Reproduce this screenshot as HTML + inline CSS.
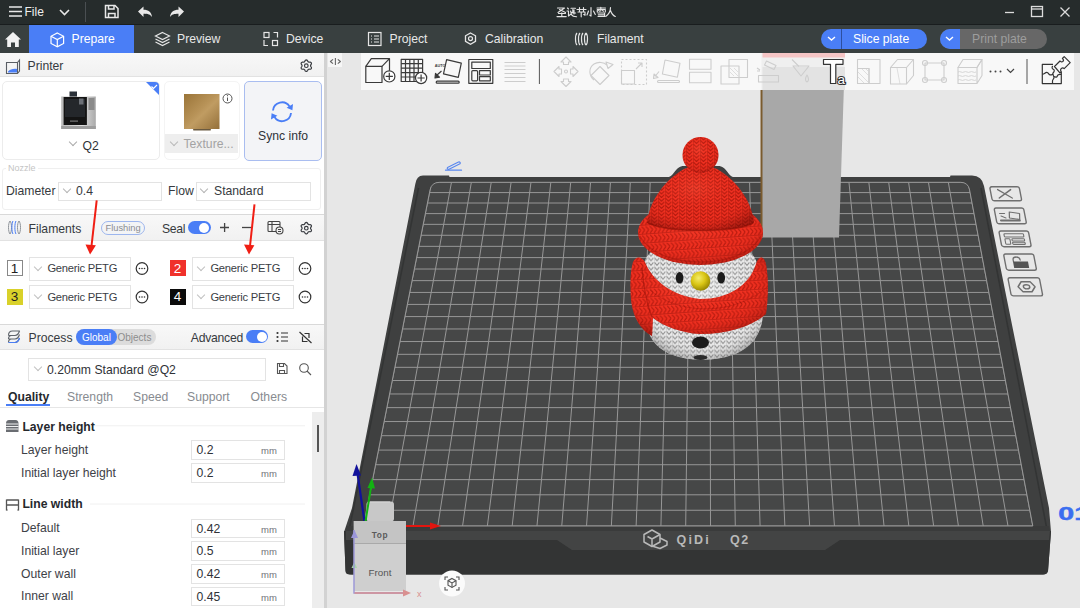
<!DOCTYPE html>
<html><head><meta charset="utf-8">
<style>
*{box-sizing:border-box;margin:0;padding:0}
html,body{width:1080px;height:608px;overflow:hidden;background:#e7e7e7;font-family:"Liberation Sans",sans-serif}
.a{position:absolute}
.t{position:absolute;white-space:nowrap;line-height:1}
#title{left:0;top:0;width:1080px;height:25px;background:#262c2c;border-bottom:1px solid #191d1e}
#tabs{left:0;top:25px;width:1080px;height:28px;background:#394040}
#panel{left:0;top:53px;width:324px;height:555px;background:#fff;overflow:hidden}
.hdr{position:absolute;left:0;width:324px;background:linear-gradient(#f8f8f8,#f1f1f1);border-top:1px solid #d9d9d9;border-bottom:1px solid #e2e2e2}
.box{position:absolute;border:1px solid #e3e3e3;background:#fff}
.dd{color:#3c3f44;font-size:12px}
.chev{position:absolute;width:6px;height:6px;border-right:1px solid #b5b5b5;border-bottom:1px solid #b5b5b5;transform:rotate(45deg)}
</style></head><body>

<!-- TITLE BAR -->
<div id="title" class="a">
  <svg class="a" style="left:0;top:0" width="1080" height="25">
    <g stroke="#e8e8e8" stroke-width="1.6" fill="none">
      <path d="M9 7h13M9 11.5h13M9 16h13"/>
      <path d="M60 10l4.5 4.5 4.5-4.5"/>
    </g>
    <line x1="85.5" y1="2" x2="85.5" y2="22" stroke="#4a4f52" stroke-width="1"/>
    <g stroke="#e8e8e8" stroke-width="1.5" fill="none">
      <path d="M105.5 5.5h9.5l3 3v9h-12.5z"/>
      <path d="M108.5 5.5v3.5h5.5v-3.5M108.5 17.5v-4h6.5v4"/>
    </g>
    <path d="M138 11.5l5.5-5v3.2c5 0 8 2.3 8.5 7.3-1.6-2.6-4-3.3-8.5-3.3v3.3z" fill="#e8e8e8"/>
    <path d="M184 11.5l-5.5-5v3.2c-5 0-8 2.3-8.5 7.3 1.6-2.6 4-3.3 8.5-3.3v3.3z" fill="#e8e8e8"/>
    <g stroke="#dcdcdc" stroke-width="1.3" fill="none">
      <path d="M1005 12.5h9"/>
      <rect x="1031.5" y="6.5" width="11" height="10"/>
      <path d="M1031.5 9h11"/>
      <path d="M1060.5 7.5l9 9M1069.5 7.5l-9 9"/>
    </g>
  </svg>
  <div class="t" style="left:24.5px;top:6px;font-size:12px;color:#eee">File</div>
  <svg class="a" style="left:0;top:0" width="1080" height="25"><g fill="none" stroke="#e4e4e4" stroke-width="1.15" stroke-linecap="round" stroke-linejoin="round">
    <path d="M557.5 8h7l-6.5 4.5M559.5 9.5l6 3M558.5 13.5h7M561.8 12.8v3.7M557 16.6h9.2"/>
    <path d="M567.5 8l1 1M567 11h1.5v5l1.5-1.2M571 8.2h4.5M572.8 9.5v3.5h2.8M574 9.8v4.2M570.6 11l1 3.8c1 1.7 3 1.9 5 1.9M571.8 12.5l-1.2 2"/>
    <path d="M577 9.5h9M579.5 7.5v3.5M583.5 7.5v3.5M578 12h7v3.2l-1.3-.6M581.2 12v4.8"/>
    <path d="M591 7.5v8.6l-1.3-1M588.5 11l-1.5 4M593.5 11l1.8 3.5"/>
    <path d="M597 8h8.5M600.8 7.3v3.8M597.3 12v-2.5h8v2.5M598.6 10.5l1 .7M602.5 10.5l1 .7M598 13h6.6v3.5h-6.6M598.3 14.8h6.3"/>
    <path d="M610.5 7.5c0 4-2 7-4.8 9M610.5 10.5c1 3 2.5 5 4.8 6"/>
  </g></svg>
</div>

<!-- TAB BAR -->
<div id="tabs" class="a">
  <div class="a" style="left:29px;top:0;width:105px;height:28px;background:#4a7ef6"></div>
  <svg class="a" style="left:0;top:0" width="1080" height="28">
    <path d="M5 14.5l8-7.5 8 7.5h-2.2v7.5h-3.8v-4.5h-4v4.5h-3.8v-7.5z" fill="#f2f2f2"/>
    <g stroke="#fff" stroke-width="1.2" fill="none">
      <path d="M57.3 8l6.3 3.3v7.2l-6.3 3.3-6.3-3.3v-7.2z"/><path d="M51 11.3l6.3 3.3 6.3-3.3M57.3 14.6v7.2"/>
    </g>
    <g stroke="#e6e6e6" stroke-width="1.2" fill="none">
      <path d="M162.5 7.5l7 3.5-7 3.5-7-3.5z"/><path d="M155.5 14l7 3.5 7-3.5M155.5 17l7 3.5 7-3.5"/>
      <rect x="264" y="7.5" width="5" height="5"/><rect x="272.5" y="15.5" width="5" height="5"/>
      <path d="M264 15v5.5h4M277.5 12.5v-5h-4"/>
      <rect x="368.5" y="7.5" width="12.5" height="13"/><path d="M371 11h1M374 11h5M371 14h1M374 14h5M371 17h1M374 17h5"/>
      <path d="M470.5 8l5 2.8v5.6l-5 2.8-5-2.8v-5.6z" stroke-width="1.3"/><circle cx="470.5" cy="13.6" r="2"/>
      <path d="M577 8c-2 2-2 10 0 12M580 8c-2 2-2 10 0 12M583 8c-2 2-2 10 0 12M586 8c-2 2-2 10 0 12M586 8c2 2 2 10 0 12"/>
    </g>
  </svg>
  <div class="t" style="left:71.5px;top:8px;font-size:12.2px;color:#fff">Prepare</div>
  <div class="t" style="left:177px;top:8px;font-size:12.2px;color:#e8e8e8">Preview</div>
  <div class="t" style="left:286px;top:8px;font-size:12.2px;color:#e8e8e8">Device</div>
  <div class="t" style="left:389.5px;top:8px;font-size:12.2px;color:#e8e8e8">Project</div>
  <div class="t" style="left:485px;top:8px;font-size:12.2px;color:#e8e8e8">Calibration</div>
  <div class="t" style="left:597px;top:8px;font-size:12.2px;color:#e8e8e8">Filament</div>
  <!-- slice plate -->
  <div class="a" style="left:821px;top:4px;width:106px;height:19.5px;border-radius:10px;background:#4a7ef6"></div>
  <div class="a" style="left:841px;top:4px;width:1px;height:19.5px;background:#2d4f9f"></div>
  <div class="t" style="left:853px;top:8px;font-size:12.2px;color:#fff">Slice plate</div>
  <div class="a" style="left:939.5px;top:4px;width:107.5px;height:19.5px;border-radius:10px;background:#676767;overflow:hidden">
    <div class="a" style="left:0;top:0;width:20px;height:20px;background:#4a7ef6"></div>
  </div>
  <div class="t" style="left:972px;top:8px;font-size:12.2px;color:#9d9d9d">Print plate</div>
  <svg class="a" style="left:0;top:0" width="1080" height="28">
    <g stroke="#fff" stroke-width="1.4" fill="none"><path d="M828 12l3.5 3 3.5-3M946 12l3.5 3 3.5-3"/></g>
  </svg>
</div>

<!-- 3D VIEW -->
<div class="a" style="left:327px;top:53px;width:753px;height:555px;background:#e7e7e7;overflow:hidden">
<svg class="a" style="left:-327px;top:-53px" width="1080" height="608">
  <!-- plate body -->
  <path d="M352 508 L415.3 184 Q416.5 175.5 423 175.5 L449 175.5 L449.5 177 L668 177 C674 177,675 166,684 166 L718 166 C727 166,728 177,734 177 L950 177 L950.5 175.5 L972 175.5 Q982 175.5 984 186 L1049 508 L1051 532 L1048 571 Q1047 574.5 1043 574.5 L352 574.5 Q345.5 574.5 345.5 570 L344 532 Z" fill="#3f4040"/>
  <path d="M418.5 188 L349.5 528" stroke="#333434" stroke-width="1.6" fill="none"/>
  <path d="M981 188 L1046.5 527" stroke="#333434" stroke-width="1.6" fill="none"/>
  <!-- front face -->
  <path d="M344 531 L1051 531 L1048 571 Q1047 574.5 1043 574.5 L350 574.5 Q345.5 574.5 345.5 571 Z" fill="#333434"/>
  <path d="M346 531 L1050 531 L1049 540 L840 540 L825 550 L572 550 L557 540 L346 540 Z" fill="#434444"/>
  <path d="M346 526 L1049 526 L1050 531 L346 531 Z" fill="#3a3b3b"/>
  <!-- grid area -->
  <defs><clipPath id="gclip"><path d="M439.5 182.3 L960.5 182.3 Q968.2 182.3 969.6 190 L1032.8 526 L363.4 526 L430 190 Q431.6 182.3 439.5 182.3Z"/></clipPath></defs>
  <path d="M439.5 182.3 L960.5 182.3 Q968.2 182.3 969.6 190 L1032.8 526 L363.4 526 L430 190 Q431.6 182.3 439.5 182.3Z" fill="#464747"/>
  <g stroke="#979797" stroke-width="1" fill="none" clip-path="url(#gclip)">
<line x1="431.60" y1="182.30" x2="363.40" y2="526.00"/>
<line x1="431.60" y1="182.30" x2="968.20" y2="182.30"/>
<line x1="451.47" y1="182.30" x2="388.19" y2="526.00"/>
<line x1="429.56" y1="192.58" x2="970.13" y2="192.58"/>
<line x1="471.35" y1="182.30" x2="412.99" y2="526.00"/>
<line x1="427.49" y1="203.01" x2="972.09" y2="203.01"/>
<line x1="491.22" y1="182.30" x2="437.78" y2="526.00"/>
<line x1="425.39" y1="213.60" x2="974.08" y2="213.60"/>
<line x1="511.10" y1="182.30" x2="462.57" y2="526.00"/>
<line x1="423.26" y1="224.35" x2="976.10" y2="224.35"/>
<line x1="530.97" y1="182.30" x2="487.36" y2="526.00"/>
<line x1="421.09" y1="235.27" x2="978.16" y2="235.27"/>
<line x1="550.84" y1="182.30" x2="512.16" y2="526.00"/>
<line x1="418.89" y1="246.35" x2="980.24" y2="246.35"/>
<line x1="570.72" y1="182.30" x2="536.95" y2="526.00"/>
<line x1="416.66" y1="257.60" x2="982.35" y2="257.60"/>
<line x1="590.59" y1="182.30" x2="561.74" y2="526.00"/>
<line x1="414.39" y1="269.03" x2="984.50" y2="269.03"/>
<line x1="610.47" y1="182.30" x2="586.53" y2="526.00"/>
<line x1="412.09" y1="280.64" x2="986.68" y2="280.64"/>
<line x1="630.34" y1="182.30" x2="611.33" y2="526.00"/>
<line x1="409.75" y1="292.43" x2="988.90" y2="292.43"/>
<line x1="650.21" y1="182.30" x2="636.12" y2="526.00"/>
<line x1="407.37" y1="304.42" x2="991.15" y2="304.42"/>
<line x1="670.09" y1="182.30" x2="660.91" y2="526.00"/>
<line x1="404.95" y1="316.59" x2="993.44" y2="316.59"/>
<line x1="689.96" y1="182.30" x2="685.70" y2="526.00"/>
<line x1="402.50" y1="328.96" x2="995.77" y2="328.96"/>
<line x1="709.84" y1="182.30" x2="710.50" y2="526.00"/>
<line x1="400.00" y1="341.54" x2="998.13" y2="341.54"/>
<line x1="729.71" y1="182.30" x2="735.29" y2="526.00"/>
<line x1="397.47" y1="354.32" x2="1000.53" y2="354.32"/>
<line x1="749.59" y1="182.30" x2="760.08" y2="526.00"/>
<line x1="394.89" y1="367.32" x2="1002.98" y2="367.32"/>
<line x1="769.46" y1="182.30" x2="784.87" y2="526.00"/>
<line x1="392.26" y1="380.53" x2="1005.46" y2="380.53"/>
<line x1="789.33" y1="182.30" x2="809.67" y2="526.00"/>
<line x1="389.60" y1="393.97" x2="1007.98" y2="393.97"/>
<line x1="809.21" y1="182.30" x2="834.46" y2="526.00"/>
<line x1="386.89" y1="407.64" x2="1010.55" y2="407.64"/>
<line x1="829.08" y1="182.30" x2="859.25" y2="526.00"/>
<line x1="384.13" y1="421.54" x2="1013.17" y2="421.54"/>
<line x1="848.96" y1="182.30" x2="884.04" y2="526.00"/>
<line x1="381.32" y1="435.69" x2="1015.83" y2="435.69"/>
<line x1="868.83" y1="182.30" x2="908.84" y2="526.00"/>
<line x1="378.46" y1="450.08" x2="1018.53" y2="450.08"/>
<line x1="888.70" y1="182.30" x2="933.63" y2="526.00"/>
<line x1="375.56" y1="464.73" x2="1021.28" y2="464.73"/>
<line x1="908.58" y1="182.30" x2="958.42" y2="526.00"/>
<line x1="372.60" y1="479.63" x2="1024.09" y2="479.63"/>
<line x1="928.45" y1="182.30" x2="983.21" y2="526.00"/>
<line x1="369.59" y1="494.81" x2="1026.94" y2="494.81"/>
<line x1="948.33" y1="182.30" x2="1008.01" y2="526.00"/>
<line x1="366.52" y1="510.26" x2="1029.84" y2="510.26"/>
<line x1="968.20" y1="182.30" x2="1032.80" y2="526.00"/>
<line x1="363.40" y1="526.00" x2="1032.80" y2="526.00"/>
  </g>
  <path d="M439.5 182.3 L960.5 182.3 Q968.2 182.3 969.6 190 L1032.8 526 L363.4 526 L430 190 Q431.6 182.3 439.5 182.3Z" fill="none" stroke="#979797" stroke-width="1"/>
  <!-- QIDI logo -->
  <g stroke="#b9b9b9" stroke-width="1.5" fill="none" stroke-linejoin="round">
    <path d="M644 534.5l8-4.5 8 4.5v7.5l-8 4.5-8-4.5z"/><path d="M652 539l8-4.5M652 539v7.5M652 539l-4.5-2.5"/>
    <path d="M660 538l7 3.5v3.5l-7 3.5-8-2.5"/>
  </g>
  <text x="676.5" y="543.5" font-family="Liberation Sans" font-weight="bold" font-size="12.5" fill="#b9b9b9" letter-spacing="2.2">QiDi</text>
  <text x="730" y="543.5" font-family="Liberation Sans" font-weight="bold" font-size="12.5" fill="#b9b9b9" letter-spacing="1.5">Q2</text>
  <!-- pillar -->
  <path d="M761.5 53 L845 53 L839 237.5 L761.5 237.5Z" fill="#a8a8a8"/>
  <path d="M760.5 90 L762.5 90 L762.5 237 L760.5 237Z" fill="#7a5b2e"/>
  <!-- SNOWMAN -->
  <defs>
    <pattern id="knitR" width="7" height="3.6" patternUnits="userSpaceOnUse">
      <rect width="7" height="3.6" fill="#f03020"/>
      <path d="M0.6 0.3L3.5 3.2L6.4 0.3" fill="none" stroke="#a0130a" stroke-width="1.1" opacity=".8"/>
      <path d="M0 0v3.6" stroke="#8a1008" stroke-width=".9" opacity=".7"/>
    </pattern>
    <pattern id="knitW" width="6" height="4.6" patternUnits="userSpaceOnUse">
      <rect width="6" height="4.6" fill="#e8e8e8"/>
      <path d="M0.6 0.4L3 3.1L5.4 0.4" fill="none" stroke="#858585" stroke-width="1.2" opacity=".9"/><path d="M0 0v4.6" stroke="#9a9a9a" stroke-width=".7" opacity=".7"/>
    </pattern>
    <pattern id="knitRb" width="4" height="9" patternUnits="userSpaceOnUse" patternTransform="rotate(-4)">
      <rect width="4" height="9" fill="#f03020"/>
      <path d="M0.3 0.8L3.2 4.3M0.3 7.8L3.2 4.3" fill="none" stroke="#a0130a" stroke-width="1.1" opacity=".8"/>
      <path d="M0 8.8h4" stroke="#8a1008" stroke-width=".9" opacity=".7"/>
    </pattern>
    <radialGradient id="shadeR" cx=".45" cy=".35" r=".7">
      <stop offset="0" stop-color="#ff6a50" stop-opacity=".25"/>
      <stop offset=".6" stop-color="#ff3020" stop-opacity="0"/>
      <stop offset="1" stop-color="#6a0a05" stop-opacity=".5"/>
    </radialGradient>
    <radialGradient id="shadeW" cx=".5" cy=".4" r=".65">
      <stop offset="0" stop-color="#fff" stop-opacity=".3"/>
      <stop offset=".7" stop-color="#fff" stop-opacity="0"/>
      <stop offset="1" stop-color="#444" stop-opacity=".5"/>
    </radialGradient>
    <radialGradient id="nose" cx=".4" cy=".35" r=".7">
      <stop offset="0" stop-color="#f4ec6a"/><stop offset=".5" stop-color="#d9c514"/><stop offset="1" stop-color="#8f7f00"/>
    </radialGradient>
  </defs>
  <!-- body -->
  <path id="bodyP" d="M643 270 C643 248,668 240,701 240 C736 240,757 248,758 270 L763 305 C765 335,750 359,703 360 C656 359,645 337,645 310 Z" fill="url(#knitW)"/>
  <path d="M643 270 C643 248,668 240,701 240 C736 240,757 248,758 270 L763 305 C765 335,750 359,703 360 C656 359,645 337,645 310 Z" fill="url(#shadeW)"/>
  <!-- hat brim -->
  <ellipse cx="700.5" cy="232.5" rx="62.5" ry="32.5" fill="url(#knitRb)"/>
  <ellipse cx="700.5" cy="232.5" rx="62.5" ry="32.5" fill="url(#shadeR)"/>
  <path d="M640 236 C650 256,680 262,700.5 262 C725 262,752 254,761 236" fill="none" stroke="#a0140a" stroke-width="1.2" opacity=".45"/>
  <!-- dome -->
  <path d="M647 223 C649 203,662 182,684 169 C692 164.5,709 164.5,717 169 C739 182,752 203,754 223 C735 233,668 233,647 223Z" fill="url(#knitR)"/>
  <path d="M647 223 C649 203,662 182,684 169 C692 164.5,709 164.5,717 169 C739 182,752 203,754 223 C735 233,668 233,647 223Z" fill="url(#shadeR)"/>
  <path d="M648 223 C668 233,735 233,753 223" fill="none" stroke="#8a0e06" stroke-width="1.6" opacity=".55"/>
  <!-- pompom -->
  <circle cx="700.5" cy="155" r="18" fill="url(#knitR)"/>
  <circle cx="700.5" cy="155" r="18" fill="url(#shadeR)"/>
  <!-- face details -->
  <ellipse cx="679.6" cy="277.8" rx="3.9" ry="5.8" fill="#1b1b1b"/>
  <ellipse cx="721.2" cy="277.8" rx="3.9" ry="5.8" fill="#1b1b1b"/>
  <circle cx="700.5" cy="281" r="9.8" fill="url(#nose)"/>
  <!-- scarf -->
  <path d="M633 262 C636 256,641 256,645 262 C652 280,672 296,700 299 C728 299,749 286,756 264 C758 256,764 255,766 264 C769 280,768 300,766 314 C752 326,728 334,700 334 C682 333,665 327,653 318 L652 336 C641 330,633 318,631 300 C630 285,630 272,633 262Z" fill="url(#knitRb)"/>
  <path d="M633 262 C636 256,641 256,645 262 C652 280,672 296,700 299 C728 299,749 286,756 264 C758 256,764 255,766 264 C769 280,768 300,766 314 C752 326,728 334,700 334 C682 333,665 327,653 318 L652 336 C641 330,633 318,631 300 C630 285,630 272,633 262Z" fill="url(#shadeR)"/>
  <path d="M652 317 C647 305,644 290,642 268" fill="none" stroke="#8a0e06" stroke-width="1.2" opacity=".45"/>
  <path d="M650 290 C675 313,730 318,766 288" fill="none" stroke="#8a0e06" stroke-width="1" opacity=".3"/>
  <ellipse cx="700.5" cy="342.5" rx="8.5" ry="6" fill="#1b1b1b"/>
  <ellipse cx="700.5" cy="357.5" rx="7" ry="2.5" fill="#2a2a2a"/>
  <!-- right plate icons -->
  <g fill="none" stroke="#6f6f6f" stroke-width="1.4" stroke-linejoin="round" stroke-linecap="round">
    <g transform="translate(989.6 186.8) skewX(11)">
      <rect x="0" y="0" width="29.5" height="14" rx="2"/>
      <path d="M7.5 2.8l13 8.4M20.5 2.8l-13 8.4"/>
    </g>
    <g transform="translate(994 208) skewX(11)">
      <rect x="0" y="0" width="29.5" height="15.8" rx="2"/>
      <path d="M14.5 4l10 1.5-1 6-10-1.5z" stroke-width="1.2"/>
      <path d="M4.5 12.5h19" stroke-width="1.8"/><path d="M4.5 5.5h5M5.5 8l4.5 2" stroke-width="1.1"/>
    </g>
    <g transform="translate(998.8 231) skewX(11)">
      <rect x="0" y="0" width="29.5" height="15.7" rx="2"/>
      <rect x="4.5" y="2.8" width="19.5" height="3.2" rx=".8" stroke-width="1.1"/>
      <rect x="4.5" y="7.8" width="5" height="5.5" rx=".8" stroke-width="1.1"/>
      <rect x="11.5" y="7.8" width="12.5" height="2.2" rx=".8" stroke-width="1.1"/>
      <rect x="11.5" y="11.2" width="12.5" height="2.2" rx=".8" stroke-width="1.1"/>
    </g>
    <g transform="translate(1003.5 254) skewX(11)">
      <rect x="0" y="0" width="30" height="16.2" rx="2"/>
      <path d="M8.5 7.5v-1.5c0-2 1.5-3 3.5-3s3.5 1 3.5 3" stroke-width="1.3"/>
    </g>
    <g transform="translate(1007.8 277.7) skewX(11)">
      <rect x="0" y="0" width="31.5" height="18.2" rx="2"/>
      <path d="M8.5 9.1l4-5h9l4 5-4 5h-9z"/><ellipse cx="17" cy="9.1" rx="3.2" ry="2.1"/>
    </g>
  </g>
  <g transform="translate(1003.5 254) skewX(11)"><rect x="8" y="7.5" width="15" height="6.5" fill="#555"/></g>
  <!-- "01" -->
  <text x="1058.3" y="520" font-family="Liberation Sans" font-weight="bold" font-size="19" fill="#3a6ef0" stroke="#3a6ef0" stroke-width=".5" transform="translate(1058.3 520) scale(1.5 1) translate(-1058.3 -520)">01</text>
  <!-- gizmo -->
  <rect x="366.5" y="501.5" width="27.5" height="20" rx="3" fill="#c8c8c8"/>
  <path d="M370 502h20" stroke="#d8d8d8" stroke-width="1"/>
  <path d="M364.5 521.5L357 470" stroke="#11119a" stroke-width="2.2"/>
  <path d="M352.5 476l4-12 4.5 11.5z" fill="#11119a"/>
  <path d="M365.5 521.5L371.5 484" stroke="#12b312" stroke-width="2"/>
  <path d="M367.5 488l4.5-10.5 3 11z" fill="#12b312"/>
  <path d="M366 526h67" stroke="#e3150f" stroke-width="2"/>
  <path d="M430 522.5l11 3.5-11 3.5z" fill="#e3150f"/>
  <rect x="353.8" y="521" width="52.2" height="70" fill="#cfcfcf"/>
  <rect x="353.8" y="521" width="52.2" height="22" fill="#c4c4c4"/>
  <path d="M353.8 543.5h52.2" stroke="#a9a9a9" stroke-width="1"/>
  <text x="380" y="537.8" text-anchor="middle" font-family="Liberation Sans" font-weight="bold" font-size="8.3" fill="#5a5a5a" letter-spacing=".6">Top</text>
  <text x="380" y="575.5" text-anchor="middle" font-family="Liberation Sans" font-size="9.8" fill="#555">Front</text>
  <path d="M351.5 568l2.8-6 2.8 6z" fill="#a8d8a8"/>
  <path d="M354 530v63h54" stroke="#9a95d8" stroke-width="1.4" fill="none"/>
  <path d="M408 593" stroke="#d78a8a"/>
  <path d="M354.5 593h50" stroke="#d99090" stroke-width="1.6"/>
  <path d="M403 589.5l8 3.5-8 3.5z" fill="#d99090"/>
  <path d="M351 538l3.5-8 3.5 8z" fill="#9a95d8"/>
  <text x="417" y="597" font-family="Liberation Sans" font-size="9" fill="#d99090">x</text>
  <circle cx="452" cy="583.5" r="13" fill="#fbfbfb"/>
  <g fill="none" stroke="#555" stroke-width="1.1"><path d="M445 580v-3h3M456 577h3v3M459 587v3h-3M448 590h-3v-3"/><path d="M452 578.5l4 2.2v4.5l-4 2.2-4-2.2v-4.5z"/><path d="M448 580.7l4 2.2 4-2.2M452 582.9v4.5"/></g>
  <!-- pencil -->
  <g stroke="#5a88ef" stroke-width="1.2" fill="none" stroke-linecap="round" stroke-linejoin="round"><path d="M445.5 170.2h16"/><path d="M447.5 167.5l11-5.5c1.2-.5 2.3.8 1.5 1.8l-11 5.5c-1.2.5-2.3-.8-1.5-1.8z"/></g>
</svg>
</div>

<!-- TOOLBAR -->
<div class="a" style="left:361px;top:53px;width:713px;height:37px;background:rgba(250,250,250,0.86)"></div>

<svg class="a" style="left:0;top:0" width="1080" height="100">
  <!-- pillar behind toolbar -->
  <rect x="762.5" y="53" width="82.5" height="4.5" fill="#f5c5c5"/>
  <rect x="762.5" y="67" width="82.5" height="23" fill="#e3e3e3"/>
  <g fill="none" stroke="#3a3a3a" stroke-width="1.2" stroke-linejoin="round">
    <!-- cube+ -->
    <path d="M365.8 66.3h16.2v16.2h-16.2z"/><path d="M365.8 66.3l5.5-7.7h18.2l-7.5 7.7M389.5 58.6v12.5"/>
    <!-- grid+ -->
    <path d="M401.2 59.3h21.4v22.2h-21.4z"/>
    <path d="M405.5 59.3v22.2M409.8 59.3v22.2M414 59.3v22.2M418.3 59.3v22.2M401.2 63.7h21.4M401.2 68.1h21.4M401.2 72.6h21.4M401.2 77h21.4"/>
    <!-- auto orient -->
    <path d="M446.6 59.6l14.7 3.6-3 14.2-14.8-3.5z"/>
    <path d="M441.5 71l-5 4.5"/><path d="M435.5 73.5l-.5 4.5 4.5-.8z" fill="#3a3a3a"/>
    <rect x="436.2" y="81.2" width="23" height="2" rx="1"/>
    <!-- layout -->
    <rect x="468.8" y="59.5" width="24" height="23.8"/>
    <rect x="471.8" y="62.2" width="18.5" height="6.3"/>
    <rect x="471.8" y="70.6" width="5.8" height="10.2" rx="1"/>
    <rect x="479.5" y="70.6" width="10.8" height="4.4"/>
    <rect x="479.5" y="76.6" width="10.8" height="4.2"/>
  </g>
  <g fill="#fff" stroke="#3a3a3a" stroke-width="1.2">
    <circle cx="389.3" cy="76.4" r="5.6"/><circle cx="421.1" cy="78" r="5.6"/>
  </g>
  <path d="M389.3 72.8v7.2M385.7 76.4h7.2M421.1 74.4v7.2M417.5 78h7.2" stroke="#3a3a3a" stroke-width="1.2"/>
  <text x="434.8" y="67.2" font-family="Liberation Sans" font-weight="bold" font-size="3.8" fill="#3a3a3a">AUTO</text>
  <path d="M539.4 59v25M1027 59v25" stroke="#555" stroke-width="1"/>
  <!-- disabled icons -->
  <g fill="none" stroke="#cdcdcd" stroke-width="1.1" stroke-linejoin="round">
    <path d="M504.5 62.5h21M504.5 66h21M504.5 69.5h21M504.5 73.5h21M504.5 77.5h21M504.5 81.5h21"/>
    <!-- move -->
    <path d="M563.5 64.5v-2.5h-2.5l5-5 5 5h-2.5v2.5zM563.5 79v2.5h-2.5l5 5 5-5h-2.5v-2.5zM559 69v-2.5l-5 5 5 5v-2.5h2.5v-5zM573 69v-2.5l5 5-5 5v-2.5h-2.5v-5z"/>
    <circle cx="566" cy="71.5" r="1.5"/>
    <!-- rotate -->
    <path d="M594 80c-5-4-6-12 0-16 4-2.5 10-2 13 1"/><path d="M606 62l7 2.5-5 4z"/>
    <path d="M600 66.5l9 9-9 9-9-9z"/>
    <!-- scale -->
    <path d="M621.5 59.5h25v25h-25z" stroke-dasharray="2 2"/>
    <path d="M621.5 70.5h13v13.5h-13z"/><path d="M636 69l6-6M638 63h4v4"/>
    <!-- lay on face -->
    <path d="M665 60l15 3.2-2.6 14-15-3.2z"/><path d="M659 71.5l-4 5"/><path d="M654 74l-.5 4.5 4.5-1z"/>
    <rect x="657.5" y="80.5" width="22" height="2" rx="1"/>
    <!-- split -->
    <rect x="689.5" y="59.3" width="21.5" height="10"/><rect x="689.5" y="72.2" width="21.5" height="10.5"/>
    <!-- boolean -->
    <rect x="721" y="66" width="18" height="18"/><rect x="729" y="59.5" width="18.5" height="18"/>
    <path d="M730 68l8 8M730 72l4 4M734 68l4 4" stroke-width=".6"/>
    <!-- support paint -->
    <path d="M766.5 61l9.5 4.5-2 4-9.5-4.5z"/><rect x="758.5" y="75.5" width="20" height="6.5"/><path d="M757 68l3 2M757 71h3"/>
    <!-- paint bucket -->
    <path d="M793 66h16l-8 10z"/><path d="M792 59.5l7 7M807 75c-2 3-2 6 0 7 2-1 2-4 0-7z"/>
    <!-- cut -->
    <path d="M857.5 59.5h22.5v24h-11v-15h-11.5z"/><rect x="857.5" y="68.5" width="11.5" height="15"/>
    <path d="M858 72l10 10M858 77l6 6M862 69l6 6M866 69l2 2" stroke-width=".6"/>
    <!-- cube -->
    <path d="M890.5 67.5h16v16.5h-16z"/><path d="M890.5 67.5l7-8h16l-7 8M913.5 59.5v16l-7 8.5"/><path d="M897 68l3 16" stroke-width=".6"/>
    <!-- measure -->
    <rect x="925" y="63" width="19" height="17"/>
    <circle cx="925" cy="63" r="2.5"/><circle cx="944" cy="63" r="2.5"/><circle cx="925" cy="80" r="2.5"/><circle cx="944" cy="80" r="2.5"/>
    <!-- layers stack -->
    <path d="M958 67.5l5-8h19l-5 8z"/><path d="M958 67.5h19v16h-19zM977 67.5l5-8v16l-5 8"/>
    <path d="M958 72c2-1.5 4 1.5 6 0s4 1.5 6 0 4 1.5 6 0M958 76c2-1.5 4 1.5 6 0s4 1.5 6 0 4 1.5 6 0M958 80c2-1.5 4 1.5 6 0s4 1.5 6 0 4 1.5 6 0" stroke-width=".8"/>
  </g>
  <!-- Ta -->
  <path d="M823.5 59.5h19.5v4.8h-7.2v19.2h-5.3v-19.2h-7z" fill="#fff" stroke="#333" stroke-width="1.2" stroke-linejoin="round"/>
  <text x="837.5" y="84" font-family="Liberation Sans" font-size="13.5" fill="#fff" stroke="#333" stroke-width="2.2" paint-order="stroke" style="paint-order:stroke">a</text>
  <!-- more -->
  <g fill="#444"><circle cx="990.5" cy="71.5" r="1"/><circle cx="995.5" cy="71.5" r="1"/><circle cx="1000.5" cy="71.5" r="1"/></g>
  <path d="M1007 69l3.5 3.5 3.5-3.5" fill="none" stroke="#444" stroke-width="1.2"/>
  <!-- puzzle -->
  <g fill="none" stroke="#333" stroke-width="1.2" stroke-linejoin="round">
    <path d="M1053 64.4H1042.3V83.6H1061.3V71.8"/>
    <path d="M1042.3 74.2c2.5 0 2.5-1.8 4.5-1.8s1.5 2.5 3.5 2.5 2-.7 3-.7"/>
    <path d="M1052.8 66c-1.5 1.5-.5 3 .8 3.5s.5 2.5-.6 3.5c-1 1 1 3 1 4.5s-1.5 2-1.5 3.5v2.6"/>
    <path d="M1053.8 76.5c2 .5 3 1.5 3.5-.5s2.5-1.5 4-1.5"/>
    <path d="M1054.5 66.5l5.5-5.5c.8 1.2 2.2 1.2 3 .4s.2-2.2-.6-3l1.8-1.8 6 6-6 6c-.8-.8-2.2-.8-3 0s-.8 2.2 0 3l-1.3 1.3z"/>
  </g>
</svg>

<!-- collapse button -->
<div class="a" style="left:328px;top:53px;width:14px;height:14px;background:#f6f6f6"></div>
<svg class="a" style="left:328px;top:53px" width="16" height="16"><g fill="none" stroke="#666" stroke-width="1.1" stroke-linejoin="round"><path d="M5 6.3l-2.6 2.2 2.6 2.2M9.8 6.3l2.6 2.2-2.6 2.2M7.4 5v7"/></g></svg>

<!-- LEFT PANEL -->
<div id="panel" class="a">
  <!-- printer header -->
  <div class="hdr" style="top:0;height:24px;border-top:none"></div>
  <div class="t" style="left:27.5px;top:6.5px;font-size:12.2px;color:#363a40">Printer</div>
  <svg class="a" style="left:0;top:0" width="324" height="555">
    <!-- printer icon -->
    <g fill="none" stroke="#5a5e64" stroke-width="1.1"><path d="M6.5 9.5h11l2-2.5v11l-2 2.5h-11z"/><path d="M17.5 9.5v11"/></g>
    <path d="M8 18.5c2-2 5-3 9-2.5v3.5h-9z" fill="#4a7ef6"/>
    <!-- gear -->
    <g fill="none" stroke="#3a3d42" stroke-width="1.2" stroke-linejoin="round"><circle cx="306.3" cy="12.7" r="1.8"/><path d="M310.55 12.70 L310.61 13.08 L310.77 13.49 L311.13 13.99 L311.43 14.57 L311.45 15.10 L311.28 15.57 L310.95 15.96 L310.48 16.21 L309.84 16.24 L309.22 16.18 L308.78 16.24 L308.43 16.38 L308.13 16.62 L307.85 16.96 L307.59 17.53 L307.25 18.08 L306.79 18.36 L306.30 18.45 L305.81 18.36 L305.35 18.08 L305.01 17.53 L304.75 16.96 L304.47 16.62 L304.18 16.38 L303.82 16.24 L303.38 16.18 L302.76 16.24 L302.12 16.21 L301.65 15.96 L301.32 15.58 L301.15 15.10 L301.17 14.57 L301.47 13.99 L301.83 13.49 L301.99 13.08 L302.05 12.70 L301.99 12.32 L301.83 11.91 L301.47 11.41 L301.17 10.83 L301.15 10.30 L301.32 9.82 L301.65 9.44 L302.12 9.19 L302.76 9.16 L303.38 9.22 L303.82 9.16 L304.18 9.02 L304.47 8.78 L304.75 8.44 L305.01 7.87 L305.35 7.32 L305.81 7.04 L306.30 6.95 L306.79 7.04 L307.25 7.32 L307.59 7.87 L307.85 8.44 L308.13 8.78 L308.43 9.02 L308.78 9.16 L309.22 9.22 L309.84 9.16 L310.48 9.19 L310.95 9.44 L311.28 9.83 L311.45 10.30 L311.43 10.83 L311.13 11.41 L310.77 11.91 L310.61 12.32Z"/></g>
  </svg>
  <!-- printer card -->
  <div class="a" style="left:2px;top:27.5px;width:157.5px;height:79px;border:1px solid #ececec;border-radius:5px;background:#fff;overflow:hidden">
    <div class="a" style="right:-1px;top:-1px;width:0;height:0;border-top:15px solid #4a7ef6;border-left:15px solid transparent"></div>
  </div>
  <svg class="a" style="left:0;top:0" width="324" height="200">
    <path d="M151.5 33.5l2 2 3.5-3.5" stroke="#fff" stroke-width="1.1" fill="none"/>
    <!-- printer image -->
    <defs><linearGradient id="silver" x1="0" y1="0" x2="1" y2="0"><stop offset="0" stop-color="#b9b9b9"/><stop offset=".6" stop-color="#dedede"/><stop offset="1" stop-color="#a9a9a9"/></linearGradient></defs>
    <rect x="69.5" y="38.5" width="7.5" height="5.5" fill="#2a3038"/>
    <rect x="61.2" y="43.5" width="34.6" height="32.5" fill="url(#silver)"/>
    <rect x="63.6" y="44" width="23.3" height="28" fill="#141414"/>
    <rect x="65" y="46" width="20" height="18" fill="#24272b"/>
    <rect x="79" y="45.5" width="4.5" height="6" fill="#6c7077"/>
    <rect x="70" y="67.5" width="8" height="1.2" fill="#777"/>
    <rect x="88.5" y="45" width="6" height="12" fill="#8a8a8a"/>
    <rect x="61.2" y="73" width="34.6" height="3" fill="#9d9d9d"/>
    <!-- plate image -->
    <defs><linearGradient id="gold" x1="0" y1="0" x2="1" y2="1"><stop offset="0" stop-color="#9a7438"/><stop offset=".45" stop-color="#b89358"/><stop offset=".55" stop-color="#c09c62"/><stop offset="1" stop-color="#94703a"/></linearGradient></defs>
    <rect x="184" y="41" width="35.5" height="35" fill="url(#gold)"/>
    <rect x="193" y="76" width="18" height="1.5" rx=".7" fill="#6a5a40"/>
    <g fill="none" stroke="#555" stroke-width="1"><circle cx="227.5" cy="45.5" r="4.5"/><path d="M227.5 44.5v3.5"/></g>
    <circle cx="227.5" cy="42.7" r=".6" fill="#555"/>
  </svg>
  <div class="t" style="left:82.5px;top:86.5px;font-size:12.2px;color:#2f3237">Q2</div>
  <div class="chev" style="left:70px;top:86px;border-color:#aaa"></div>
  <!-- texture card -->
  <div class="a" style="left:163.5px;top:28px;width:76px;height:79px;border:1px solid #f4f4f4;border-radius:5px"></div>
  <div class="a" style="left:165px;top:81px;width:73px;height:19px;background:#eeeeee"></div>
  <div class="chev" style="left:170.5px;top:86px;border-color:#b9b9b9"></div>
  <div class="t" style="left:183.5px;top:84.5px;font-size:12.2px;color:#a3a3a3">Texture...</div>
  <!-- sync card -->
  <div class="a" style="left:243.5px;top:28px;width:78px;height:79.5px;border:1px solid #a9bdf0;border-radius:5px;background:#f3f4f7"></div>
  <svg class="a" style="left:0;top:0" width="324" height="200">
    <g fill="none" stroke="#4a7ef6" stroke-width="1.9"><path d="M273 57.5a9 9 0 0 1 16.5-4"/><path d="M291 60a9 9 0 0 1-16.5 4"/></g>
    <path d="M293 51l-.6 6.3-5.8-2.6z M271 66.5l.6-6.3 5.8 2.6z" fill="#4a7ef6"/>
  </svg>
  <div class="t" style="left:258px;top:76.5px;font-size:12.2px;color:#2f3237">Sync info</div>
  <!-- nozzle group -->
  <div class="a" style="left:2px;top:115px;width:319px;height:42px;border:1px solid #efefef;border-radius:3px"></div>
  <div class="a" style="left:6px;top:110px;width:32px;height:10px;background:#fff"></div>
  <div class="t" style="left:8px;top:111px;font-size:9px;color:#c4c4c4">Nozzle</div>
  <div class="t" style="left:6px;top:131.5px;font-size:12.2px;color:#363a40">Diameter</div>
  <div class="box" style="left:58px;top:128.5px;width:104px;height:19px"></div>
  <div class="chev" style="left:64px;top:133px"></div>
  <div class="t" style="left:76px;top:132px;font-size:12.2px;color:#363a40">0.4</div>
  <div class="t" style="left:168px;top:131.5px;font-size:12.2px;color:#363a40">Flow</div>
  <div class="box" style="left:195.5px;top:128.5px;width:115px;height:19px"></div>
  <div class="chev" style="left:201px;top:133px"></div>
  <div class="t" style="left:214px;top:132px;font-size:12.2px;color:#363a40">Standard</div>

  <!-- filaments header -->
  <div class="hdr" style="top:161px;height:27px"></div>
  <div class="t" style="left:28.5px;top:170px;font-size:12.2px;color:#363a40">Filaments</div>
  <svg class="a" style="left:0;top:161px" width="324" height="27">
    <g fill="none" stroke="#8f949a" stroke-width="1"><path d="M10 7c-2 2-2 11 0 13M10 7c2 2 2 11 0 13M19 7c2 2 2 11 0 13M19 7c-2 2-2 11 0 13"/></g>
    <g fill="none" stroke="#4a7ef6" stroke-width="1"><path d="M13 7c-1.5 2-1.5 11 0 13M16 7c-1.5 2-1.5 11 0 13"/></g>
    <path d="M224.6 9v9M220 13.5h9" stroke="#444" stroke-width="1.3"/>
    <path d="M242 13.5h9.5" stroke="#444" stroke-width="1.3"/>
    <g fill="none" stroke="#444" stroke-width="1.1"><rect x="268" y="7.5" width="12" height="10" rx="1"/><path d="M268 10.5h12M272 7.5v10"/><circle cx="279.5" cy="16.5" r="3.5" fill="#f1f1f1"/><path d="M278 15.5h3M278 17.5h3"/></g>
    <g fill="none" stroke="#3a3d42" stroke-width="1.2" stroke-linejoin="round"><circle cx="306.3" cy="14.2" r="1.8"/><path d="M310.55 14.20 L310.61 14.58 L310.77 14.99 L311.13 15.49 L311.43 16.07 L311.45 16.60 L311.28 17.07 L310.95 17.46 L310.48 17.71 L309.84 17.74 L309.22 17.68 L308.78 17.74 L308.43 17.88 L308.13 18.12 L307.85 18.46 L307.59 19.03 L307.25 19.58 L306.79 19.86 L306.30 19.95 L305.81 19.86 L305.35 19.58 L305.01 19.03 L304.75 18.46 L304.47 18.12 L304.18 17.88 L303.82 17.74 L303.38 17.68 L302.76 17.74 L302.12 17.71 L301.65 17.46 L301.32 17.08 L301.15 16.60 L301.17 16.07 L301.47 15.49 L301.83 14.99 L301.99 14.58 L302.05 14.20 L301.99 13.82 L301.83 13.41 L301.47 12.91 L301.17 12.33 L301.15 11.80 L301.32 11.32 L301.65 10.94 L302.12 10.69 L302.76 10.66 L303.38 10.72 L303.82 10.66 L304.18 10.52 L304.47 10.28 L304.75 9.94 L305.01 9.37 L305.35 8.82 L305.81 8.54 L306.30 8.45 L306.79 8.54 L307.25 8.82 L307.59 9.37 L307.85 9.94 L308.13 10.28 L308.43 10.52 L308.78 10.66 L309.22 10.72 L309.84 10.66 L310.48 10.69 L310.95 10.94 L311.28 11.33 L311.45 11.80 L311.43 12.33 L311.13 12.91 L310.77 13.41 L310.61 13.82Z"/></g>
  </svg>
  <div class="a" style="left:101px;top:167.5px;width:43.5px;height:14px;border:1px solid #9db6ee;border-radius:7px;background:#f3f4f6"></div>
  <div class="t" style="left:105.5px;top:170.5px;font-size:9.3px;color:#8a8d92">Flushing</div>
  <div class="t" style="left:162px;top:170px;font-size:12.2px;color:#363a40;letter-spacing:-0.3px">Seal</div>
  <div class="a" style="left:188px;top:168px;width:22.5px;height:13px;border-radius:7px;background:#4a7ef6"></div>
  <div class="a" style="left:199px;top:169.5px;width:10px;height:10px;border-radius:5px;background:#fff"></div>

  <!-- filament rows -->
  <div class="a" style="left:7px;top:207px;width:15.5px;height:15.5px;border:1px solid #888;background:#fff"></div>
  <div class="t" style="left:10.8px;top:208.5px;font-size:13.5px;color:#222">1</div>
  <div class="box" style="left:28.5px;top:203.5px;width:102px;height:24px"></div>
  <div class="chev" style="left:35px;top:210.5px;border-color:#c0c0c0"></div>
  <div class="t" style="left:47.4px;top:210px;font-size:11.2px;color:#3a3d44;letter-spacing:-0.25px">Generic PETG</div>
  <div class="a" style="left:7px;top:236px;width:15.5px;height:15.5px;background:#d9d12a"></div>
  <div class="t" style="left:10.8px;top:237px;font-size:13.5px;color:#222">3</div>
  <div class="box" style="left:28.5px;top:232px;width:102px;height:24px"></div>
  <div class="chev" style="left:35px;top:239px;border-color:#c0c0c0"></div>
  <div class="t" style="left:47.4px;top:238.5px;font-size:11.2px;color:#3a3d44;letter-spacing:-0.25px">Generic PETG</div>
  <div class="a" style="left:170px;top:207px;width:15.5px;height:15.5px;background:#f0312b"></div>
  <div class="t" style="left:173.8px;top:208.5px;font-size:13.5px;color:#fff">2</div>
  <div class="box" style="left:191.5px;top:203.5px;width:102px;height:24px"></div>
  <div class="chev" style="left:198px;top:210.5px;border-color:#c0c0c0"></div>
  <div class="t" style="left:210.4px;top:210px;font-size:11.2px;color:#3a3d44;letter-spacing:-0.25px">Generic PETG</div>
  <div class="a" style="left:170px;top:236px;width:15.5px;height:15.5px;background:#0b0b0b"></div>
  <div class="t" style="left:173.8px;top:237px;font-size:13.5px;color:#fff">4</div>
  <div class="box" style="left:191.5px;top:232px;width:102px;height:24px"></div>
  <div class="chev" style="left:198px;top:239px;border-color:#c0c0c0"></div>
  <div class="t" style="left:210.4px;top:238.5px;font-size:11.2px;color:#3a3d44;letter-spacing:-0.25px">Generic PETG</div>
  <svg class="a" style="left:0;top:190px" width="324" height="80">
    <g fill="none" stroke="#333" stroke-width="1.2"><circle cx="142" cy="25.5" r="5.8"/><circle cx="142" cy="54" r="5.8"/><circle cx="305" cy="25.5" r="5.8"/><circle cx="305" cy="54" r="5.8"/></g>
    <g fill="#333"><circle cx="139.5" cy="25.5" r=".8"/><circle cx="142" cy="25.5" r=".8"/><circle cx="144.5" cy="25.5" r=".8"/><circle cx="139.5" cy="54" r=".8"/><circle cx="142" cy="54" r=".8"/><circle cx="144.5" cy="54" r=".8"/><circle cx="302.5" cy="25.5" r=".8"/><circle cx="305" cy="25.5" r=".8"/><circle cx="307.5" cy="25.5" r=".8"/><circle cx="302.5" cy="54" r=".8"/><circle cx="305" cy="54" r=".8"/><circle cx="307.5" cy="54" r=".8"/></g>
  </svg>

  <!-- process header -->
  <div class="hdr" style="top:271px;height:25.5px"></div>
  <svg class="a" style="left:0;top:271px" width="324" height="26">
    <g fill="none" stroke="#5f646b" stroke-width="1.1" stroke-linejoin="round"><path d="M8.5 11.5c0-3 1.5-4.5 4-4.5h7c-.8 2.5-2 4.5-4.5 4.5h-6.5M8.5 15c0-2 1-3.5 3-3.5M19.5 10.5c-.8 2.5-2 4.5-4.5 4.5h-6.5M8.5 18.5c0-2 1-3.5 3-3.5M19.5 14c-.8 2.5-2 4.5-4.5 4.5"/></g>
    <path d="M8.5 18.5h6.5c2.5 0 3.7-2 4.5-4.5" stroke="#4a7ef6" stroke-width="1.2" fill="none"/>
    <g fill="none" stroke="#333" stroke-width="1.2"><path d="M281 9h7M281 13h7M281 17h7"/><circle cx="277.5" cy="9" r=".5"/><circle cx="277.5" cy="13" r=".5"/><circle cx="277.5" cy="17" r=".5"/><path d="M299.5 8l12 11M304.5 9.5h4.5v4.5M302.5 12.5v5h5"/></g>
  </svg>
  <div class="t" style="left:28.5px;top:279px;font-size:12.2px;color:#363a40">Process</div>
  <div class="a" style="left:75.5px;top:276px;width:80.5px;height:15.5px;border-radius:8px;background:#dcdcdc"></div>
  <div class="a" style="left:75.5px;top:276px;width:41px;height:15.5px;border-radius:8px;background:#4a7ef6"></div>
  <div class="t" style="left:82px;top:279.5px;font-size:10px;color:#fff">Global</div>
  <div class="t" style="left:117.5px;top:279.5px;font-size:10px;color:#8d8d8d">Objects</div>
  <div class="t" style="left:190.8px;top:279px;font-size:12.2px;color:#363a40;letter-spacing:-0.25px">Advanced</div>
  <div class="a" style="left:246px;top:277px;width:22px;height:13px;border-radius:7px;background:#4a7ef6"></div>
  <div class="a" style="left:256.5px;top:278.5px;width:10px;height:10px;border-radius:5px;background:#fff"></div>

  <!-- preset -->
  <div class="box" style="left:28.3px;top:304.5px;width:238px;height:23px"></div>
  <div class="chev" style="left:35px;top:311px;border-color:#c0c0c0"></div>
  <div class="t" style="left:47px;top:311px;font-size:12.2px;color:#2f3237">0.20mm Standard @Q2</div>
  <svg class="a" style="left:0;top:300px" width="324" height="30">
    <g fill="none" stroke="#555" stroke-width="1.1"><path d="M277.5 10.5h7l2.5 2.5v7.5h-9.5z"/><path d="M279.5 10.5v3h4v-3M279.5 20.5v-3h5v3"/><circle cx="304" cy="15" r="4.3"/><path d="M307 18l4 4"/></g>
  </svg>
  <!-- tabs -->
  <div class="t" style="left:8px;top:337.5px;font-size:12.2px;color:#25282d;font-weight:bold">Quality</div>
  <div class="t" style="left:67px;top:337.5px;font-size:12.2px;color:#888b90">Strength</div>
  <div class="t" style="left:133px;top:337.5px;font-size:12.2px;color:#888b90">Speed</div>
  <div class="t" style="left:187px;top:337.5px;font-size:12.2px;color:#888b90">Support</div>
  <div class="t" style="left:250.5px;top:337.5px;font-size:12.2px;color:#888b90">Others</div>
  <div class="a" style="left:6px;top:351px;width:44px;height:2px;background:#4a7ef6"></div>
  <div class="a" style="left:0;top:353.5px;width:324px;height:1px;background:#e6e6e6"></div>
  <!-- scrollbar -->
  <div class="a" style="left:312px;top:359px;width:12px;height:200px;background:#ededed"></div>
  <div class="a" style="left:317px;top:372px;width:1.5px;height:27px;background:#555"></div>

  <!-- layer height -->
  <svg class="a" style="left:0;top:360px" width="324" height="200">
    <g fill="#6a6d72"><path d="M6 10.5c0-2 1-3.5 3-3.5h6.5c2 0 3 1.5 3 3.5v8.5h-12.5z"/></g>
    <g stroke="#fff" stroke-width=".9"><path d="M6 11h12.5M6 13.5h12.5M6 16h12.5"/></g>
    <g fill="none" stroke="#555" stroke-width="1.3"><path d="M6.5 87h12M6.5 92h12M6.5 97h1M17.5 97h1M6.5 86.5v11M18.5 86.5v11"/></g>
    <path d="M95 12.8h210M90 91h215" stroke="#f0f0f0" stroke-width="1"/>
  </svg>
  <div class="t" style="left:22.4px;top:367.5px;font-size:12.2px;color:#25282d;font-weight:bold">Layer height</div>
  <div class="t" style="left:21px;top:391px;font-size:12.2px;color:#3e4147">Layer height</div>
  <div class="t" style="left:21px;top:413.5px;font-size:12.2px;color:#3e4147">Initial layer height</div>
  <div class="t" style="left:22.4px;top:445px;font-size:12.2px;color:#25282d;font-weight:bold">Line width</div>
  <div class="t" style="left:21px;top:469px;font-size:12.2px;color:#3e4147">Default</div>
  <div class="t" style="left:21px;top:492px;font-size:12.2px;color:#3e4147">Initial layer</div>
  <div class="t" style="left:21px;top:514.5px;font-size:12.2px;color:#3e4147">Outer wall</div>
  <div class="t" style="left:21px;top:537px;font-size:12.2px;color:#3e4147">Inner wall</div>
  <div class="box" style="left:191px;top:387.2px;width:93.5px;height:19.5px"></div><div class="t" style="left:196.5px;top:391.2px;font-size:12.2px;color:#2f3237">0.2</div><div class="t" style="left:261px;top:393.2px;font-size:9.5px;color:#707378">mm</div>
<div class="box" style="left:191px;top:410.0px;width:93.5px;height:19.5px"></div><div class="t" style="left:196.5px;top:414.0px;font-size:12.2px;color:#2f3237">0.2</div><div class="t" style="left:261px;top:416.0px;font-size:9.5px;color:#707378">mm</div>
<div class="box" style="left:191px;top:465.7px;width:93.5px;height:19.5px"></div><div class="t" style="left:196.5px;top:469.7px;font-size:12.2px;color:#2f3237">0.42</div><div class="t" style="left:261px;top:471.7px;font-size:9.5px;color:#707378">mm</div>
<div class="box" style="left:191px;top:488.2px;width:93.5px;height:19.5px"></div><div class="t" style="left:196.5px;top:492.2px;font-size:12.2px;color:#2f3237">0.5</div><div class="t" style="left:261px;top:494.2px;font-size:9.5px;color:#707378">mm</div>
<div class="box" style="left:191px;top:511.0px;width:93.5px;height:19.5px"></div><div class="t" style="left:196.5px;top:515.0px;font-size:12.2px;color:#2f3237">0.42</div><div class="t" style="left:261px;top:517.0px;font-size:9.5px;color:#707378">mm</div>
<div class="box" style="left:191px;top:533.6px;width:93.5px;height:19.5px"></div><div class="t" style="left:196.5px;top:537.6px;font-size:12.2px;color:#2f3237">0.45</div><div class="t" style="left:261px;top:539.6px;font-size:9.5px;color:#707378">mm</div>

</div>
<div class="a" style="left:324px;top:53px;width:3px;height:555px;background:#d2d2d2"></div>
<svg class="a" style="left:0;top:0" width="330" height="300">
  <path d="M96.7 200.4L91.5 246" stroke="#f01e14" stroke-width="2"/>
  <path d="M85.5 244.5l4.6 10 5.8-9.3z" fill="#f01e14"/>
  <path d="M254.5 204.4L250 246" stroke="#f01e14" stroke-width="2"/>
  <path d="M244 244.5l5 10 5.4-9.3z" fill="#f01e14"/>
</svg>

</body></html>
